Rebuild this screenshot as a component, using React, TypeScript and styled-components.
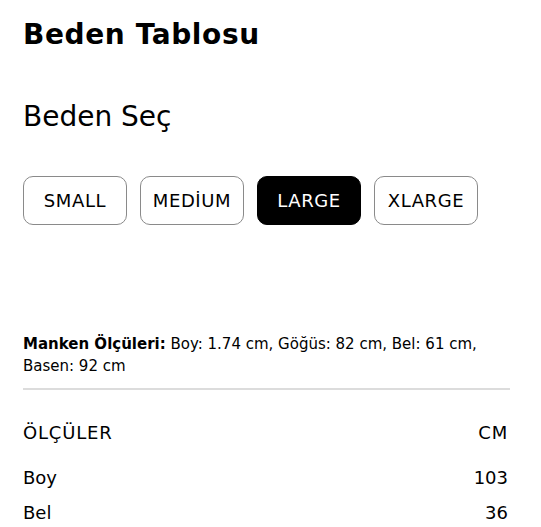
import { useState } from "react";
import styled, { createGlobalStyle } from "styled-components";

const GlobalStyle = createGlobalStyle`
  * { box-sizing: border-box; }
  body {
    margin: 0;
    background: #fff;
    color: #000;
    font-family: "DejaVu Sans", "Noto Sans", sans-serif;
  }
`;

const Wrapper = styled.div`
  width: 487px;
  margin-left: 23px;
  padding-top: 18px;
`;

const Title = styled.h1`
  margin: 0;
  font-size: 28px;
  line-height: 34px;
  font-weight: 700;
  letter-spacing: 0.6px;
`;

const SubTitle = styled.h2`
  margin: 48px 0 0;
  font-size: 28px;
  line-height: 34px;
  font-weight: 400;
`;

const SizeRow = styled.div`
  display: flex;
  gap: 13px;
  margin-top: 42px;
`;

const SizeButton = styled.button<{ $active?: boolean }>`
  width: 104px;
  height: 49px;
  border-radius: 10px;
  border: 1px solid ${(p) => (p.$active ? "#000" : "#8a8a8a")};
  background: ${(p) => (p.$active ? "#000" : "#fff")};
  color: ${(p) => (p.$active ? "#fff" : "#000")};
  font-family: inherit;
  font-size: 18px;
  letter-spacing: 0.6px;
  cursor: pointer;
  padding: 0;
`;

const ModelInfo = styled.p`
  margin: 108px 0 0;
  font-size: 15px;
  line-height: 22px;

  b {
    font-weight: 700;
  }
`;

const Divider = styled.hr`
  margin: 11px 0 0;
  border: 0;
  height: 2px;
  background: #dcdcdc;
`;

const Table = styled.div`
  margin-top: 31px;
  padding-right: 2px;
`;

const Row = styled.div<{ $head?: boolean }>`
  display: flex;
  justify-content: space-between;
  font-size: 18px;
  line-height: 24px;
  letter-spacing: ${(p) => (p.$head ? "0.8px" : "0")};
  margin-bottom: ${(p) => (p.$head ? "21px" : "11px")};
`;

const sizes = ["SMALL", "MEDİUM", "LARGE", "XLARGE"];

const measures = [
  { name: "Boy", value: 103 },
  { name: "Bel", value: 36 },
];

export default function App() {
  const [selected, setSelected] = useState("LARGE");

  return (
    <>
      <GlobalStyle />
      <Wrapper>
        <Title>Beden Tablosu</Title>
        <SubTitle>Beden Seç</SubTitle>
        <SizeRow>
          {sizes.map((s) => (
            <SizeButton key={s} $active={s === selected} onClick={() => setSelected(s)}>
              {s}
            </SizeButton>
          ))}
        </SizeRow>
        <ModelInfo>
          <b>Manken Ölçüleri:</b> Boy: 1.74 cm, Göğüs: 82 cm, Bel: 61 cm, Basen: 92 cm
        </ModelInfo>
        <Divider />
        <Table>
          <Row $head>
            <span>ÖLÇÜLER</span>
            <span>CM</span>
          </Row>
          {measures.map((m) => (
            <Row key={m.name}>
              <span>{m.name}</span>
              <span>{m.value}</span>
            </Row>
          ))}
        </Table>
      </Wrapper>
    </>
  );
}
